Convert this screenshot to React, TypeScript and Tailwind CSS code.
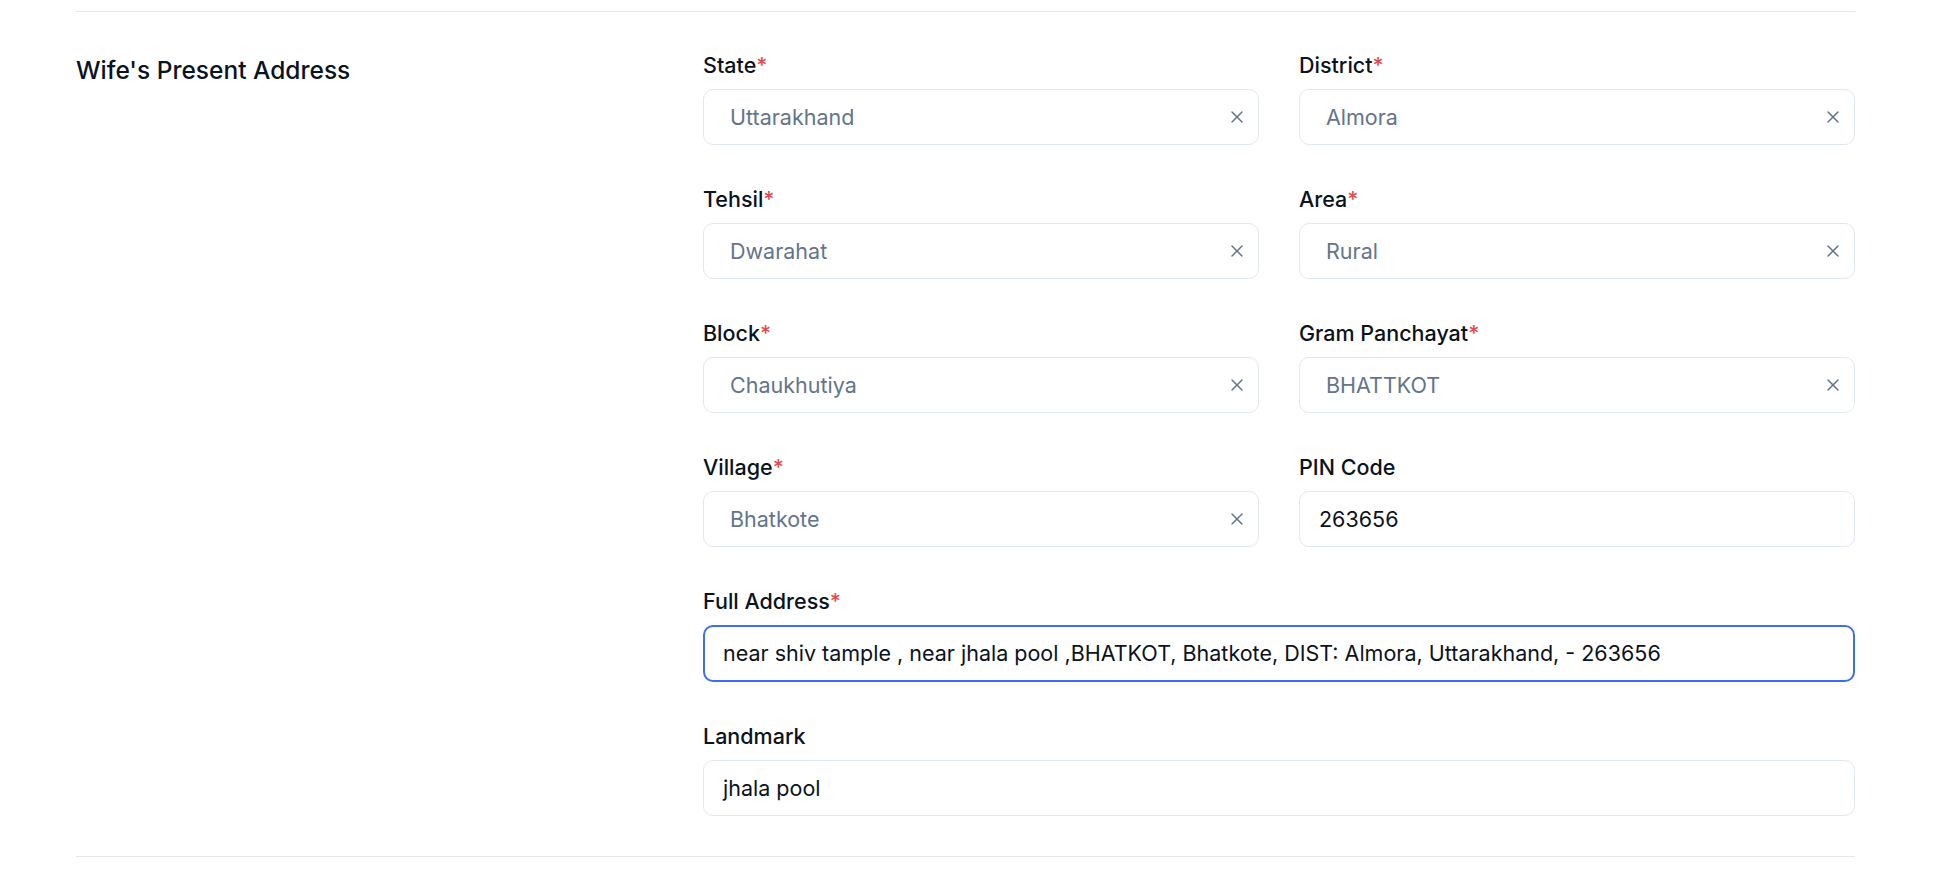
import { X } from 'lucide-react'

type Field = {
  label: string
  value: string
  required?: boolean
  select?: boolean
}

const FIELDS: Field[] = [
  { label: 'State', value: 'Uttarakhand', required: true, select: true },
  { label: 'District', value: 'Almora', required: true, select: true },
  { label: 'Tehsil', value: 'Dwarahat', required: true, select: true },
  { label: 'Area', value: 'Rural', required: true, select: true },
  { label: 'Block', value: 'Chaukhutiya', required: true, select: true },
  { label: 'Gram Panchayat', value: 'BHATTKOT', required: true, select: true },
  { label: 'Village', value: 'Bhatkote', required: true, select: true },
  { label: 'PIN Code', value: '263656' },
]

function Label({ text, required }: { text: string; required?: boolean }) {
  return (
    <label className="block text-[21.5px] leading-[28px] font-medium text-[#0b1220]">
      {text}
      {required && <span className="text-[#e5484d]">*</span>}
    </label>
  )
}

function SelectBox({ value }: { value: string }) {
  return (
    <div className="h-[56px] rounded-[10px] border border-[#e2e8f0] bg-white flex items-center justify-between pl-[26px] pr-[11px]">
      <span className="text-[21.5px] text-[#64748b]">{value}</span>
      <X className="w-[20px] h-[20px] text-[#64748b]" strokeWidth={1.8} />
    </div>
  )
}

function TextBox({ value, focused }: { value: string; focused?: boolean }) {
  return (
    <div
      className={`rounded-[10px] bg-white flex items-center ${
        focused
          ? 'h-[57px] border-2 border-[#3d6ef0] pl-[18px]'
          : 'h-[56px] border border-[#e2e8f0] pl-[19px]'
      }`}
    >
      <span className="text-[21.5px] text-[#0b1220]">{value}</span>
    </div>
  )
}

export default function App() {
  return (
    <div className="min-h-screen bg-white font-['Inter',sans-serif] pt-[11px]">
      <div className="ml-[76px] w-[1779px] border-t border-b border-[#e5e7eb] flex pt-[39px] pb-[40px]">
        {/* Section title */}
        <div className="w-[627px] shrink-0">
          <h3 className="mt-[3px] text-[24.5px] leading-[32px] font-medium text-[#0b1220]">
            Wife's Present Address
          </h3>
        </div>

        {/* Address fields */}
        <div className="flex-1 grid grid-cols-2 gap-x-[40px] gap-y-[40px]">
          {FIELDS.map((f) => (
            <div key={f.label} className="flex flex-col gap-[10px]">
              <Label text={f.label} required={f.required} />
              {f.select ? <SelectBox value={f.value} /> : <TextBox value={f.value} />}
            </div>
          ))}

          <div className="col-span-2 flex flex-col gap-[10px]">
            <Label text="Full Address" required />
            <TextBox
              focused
              value="near shiv tample , near jhala pool ,BHATKOT, Bhatkote, DIST: Almora, Uttarakhand, - 263656"
            />
          </div>

          <div className="col-span-2 flex flex-col gap-[10px]">
            <Label text="Landmark" />
            <TextBox value="jhala pool" />
          </div>
        </div>
      </div>
    </div>
  )
}
